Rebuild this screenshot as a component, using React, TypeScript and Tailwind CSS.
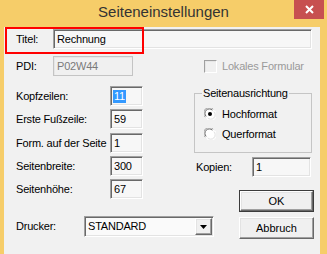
import React from "react";

const sunken =
  "border border-t-[#a0a0a0] border-l-[#a0a0a0] border-b-white border-r-white shadow-[inset_1px_1px_0_#696969,inset_-1px_-1px_0_#e3e3e3] bg-[#f7f7f7]";
const sunkenDisabled =
  "border border-[#c4c4c4] shadow-[inset_1px_1px_0_#e6e6e6] bg-[#f0f0f0]";
const raised =
  "border border-t-white border-l-white border-b-[#696969] border-r-[#696969] shadow-[inset_-1px_-1px_0_#a0a0a0,inset_1px_1px_0_#e3e3e3] bg-[#f0f0f0]";

function Field({
  label,
  value,
  selected,
  className,
}: {
  label: string;
  value: string;
  selected?: boolean;
  className: string;
}) {
  return (
    <div className={`flex h-[20px] items-center ${className}`}>
      <span className="w-[94px] shrink-0">{label}</span>
      <div className={`${sunken} flex h-[20px] w-[33px] items-center pl-[2px]`}>
        {selected ? (
          <span className="bg-[#3399ff] px-[1px] leading-[13px] text-white">{value}</span>
        ) : (
          <span className="pl-[1px]">{value}</span>
        )}
      </div>
    </div>
  );
}

function Radio({ checked }: { checked?: boolean }) {
  return (
    <svg width="12" height="12" viewBox="0 0 12 12" className="shrink-0">
      <circle cx="6" cy="6" r="5.5" fill="#ffffff" />
      <path d="M1.2 9.2 A5.3 5.3 0 0 1 9.2 1.2" fill="none" stroke="#a0a0a0" strokeWidth="1" />
      <path d="M2.2 8.4 A4.2 4.2 0 0 1 8.4 2.2" fill="none" stroke="#696969" strokeWidth="1" />
      <path d="M10.8 2.8 A5.3 5.3 0 0 1 2.8 10.8" fill="none" stroke="#ffffff" strokeWidth="1" />
      <path d="M9.8 3.6 A4.2 4.2 0 0 1 3.6 9.8" fill="none" stroke="#e3e3e3" strokeWidth="1" />
      {checked && <circle cx="6" cy="6" r="2" fill="#000" />}
    </svg>
  );
}

export default function App() {
  return (
    <div className="relative flex h-[254px] w-[327px] flex-col overflow-hidden bg-[#f6cd69] font-['Liberation_Sans',Arial,sans-serif] text-[11px] tracking-[-0.2px] text-black">
      {/* title bar */}
      <div className="relative flex h-[27px] shrink-0 items-start justify-center">
        <span className="mt-[2px] text-[15px] leading-[20px] tracking-normal text-[#333333]">
          Seiteneinstellungen
        </span>
        <div className="absolute right-[3px] top-0 flex h-[19px] w-[30px] items-center justify-center bg-[#c75050]">
          <svg width="9" height="9" viewBox="0 0 9 9">
            <path d="M1 1 L8 8 M8 1 L1 8" stroke="#ffffff" strokeWidth="2" />
          </svg>
        </div>
      </div>

      {/* client area */}
      <div className="ml-[4px] mr-[7px] flex flex-1 flex-col bg-[#f1f1f1] pl-[12px]">
        {/* Titel */}
        <div className="mt-[2px] flex h-[20px] items-center">
          <span className="w-[37px] shrink-0">Titel:</span>
          <div className={`${sunken} flex h-[20px] w-[259px] items-center pl-[3px]`}>Rechnung</div>
        </div>

        {/* PDI */}
        <div className="mt-[7px] flex h-[20px] items-center">
          <span className="w-[37px] shrink-0">PDI:</span>
          <div className={`${sunkenDisabled} flex h-[20px] w-[80px] items-center pl-[3px] text-[#7a7a7a]`}>
            P02W44
          </div>
          <div className="ml-[71px] flex items-center">
            <div className={`${sunkenDisabled} h-[13px] w-[13px] border-t-[#a0a0a0] border-l-[#a0a0a0] border-b-white border-r-white`} />
            <span className="ml-[5px] text-[#9a9a9a]">Lokales Formular</span>
          </div>
        </div>

        {/* main */}
        <div className="mt-[10px] flex">
          <div className="flex w-[178px] shrink-0 flex-col">
            <Field label="Kopfzeilen:" value="11" selected className="" />
            <Field label="Erste Fußzeile:" value="59" className="mt-[3px]" />
            <Field label="Form. auf der Seite" value="1" className="mt-[4px]" />
            <Field label="Seitenbreite:" value="300" className="mt-[3px]" />
            <Field label="Seitenhöhe:" value="67" className="mt-[3px]" />

            <div className="mt-[17px] flex h-[21px] items-center">
              <span className="w-[68px] shrink-0">Drucker:</span>
              <div className={`${sunken} flex h-[21px] w-[130px] shrink-0 items-center bg-[#fafafa]`}>
                <span className="flex-1 pl-[3px]">STANDARD</span>
                <div className={`${raised} mr-[1px] flex h-[17px] w-[17px] items-center justify-center`}>
                  <svg width="7" height="4" viewBox="0 0 7 4">
                    <path d="M0 0 H7 L3.5 4 Z" fill="#000" />
                  </svg>
                </div>
              </div>
            </div>
          </div>

          <div className="flex w-[120px] flex-col">
            <fieldset className="mt-[1px] w-[118px] border border-[#c5c5c5] pb-[11px]">
              <legend className="ml-[7px] px-[1px] leading-[13px]">Seitenausrichtung</legend>
              <div className="mt-[7px] flex h-[14px] items-center pl-[9px]">
                <Radio checked />
                <span className="ml-[6px]">Hochformat</span>
              </div>
              <div className="mt-[6px] flex h-[14px] items-center pl-[9px]">
                <Radio />
                <span className="ml-[6px]">Querformat</span>
              </div>
            </fieldset>

            <div className="mt-[4px] flex h-[20px] items-center pl-[2px]">
              <span className="w-[56px] shrink-0">Kopien:</span>
              <div className={`${sunken} flex h-[20px] w-[59px] items-center pl-[3px]`}>1</div>
            </div>

            <div className="ml-[45px] mt-[13px] h-[22px] w-[75px] border border-[#3c3c3c]">
              <div className={`${raised} flex h-full w-full items-center justify-center tracking-normal`}>OK</div>
            </div>
            <div className={`${raised} ml-[45px] mt-[5px] flex h-[22px] w-[75px] items-center justify-center tracking-normal`}>
              Abbruch
            </div>
          </div>
        </div>
      </div>

      {/* annotation rectangle */}
      <div className="absolute left-[5px] top-[27px] h-[27px] w-[139px] border-2 border-[#ff0000]" />
    </div>
  );
}
